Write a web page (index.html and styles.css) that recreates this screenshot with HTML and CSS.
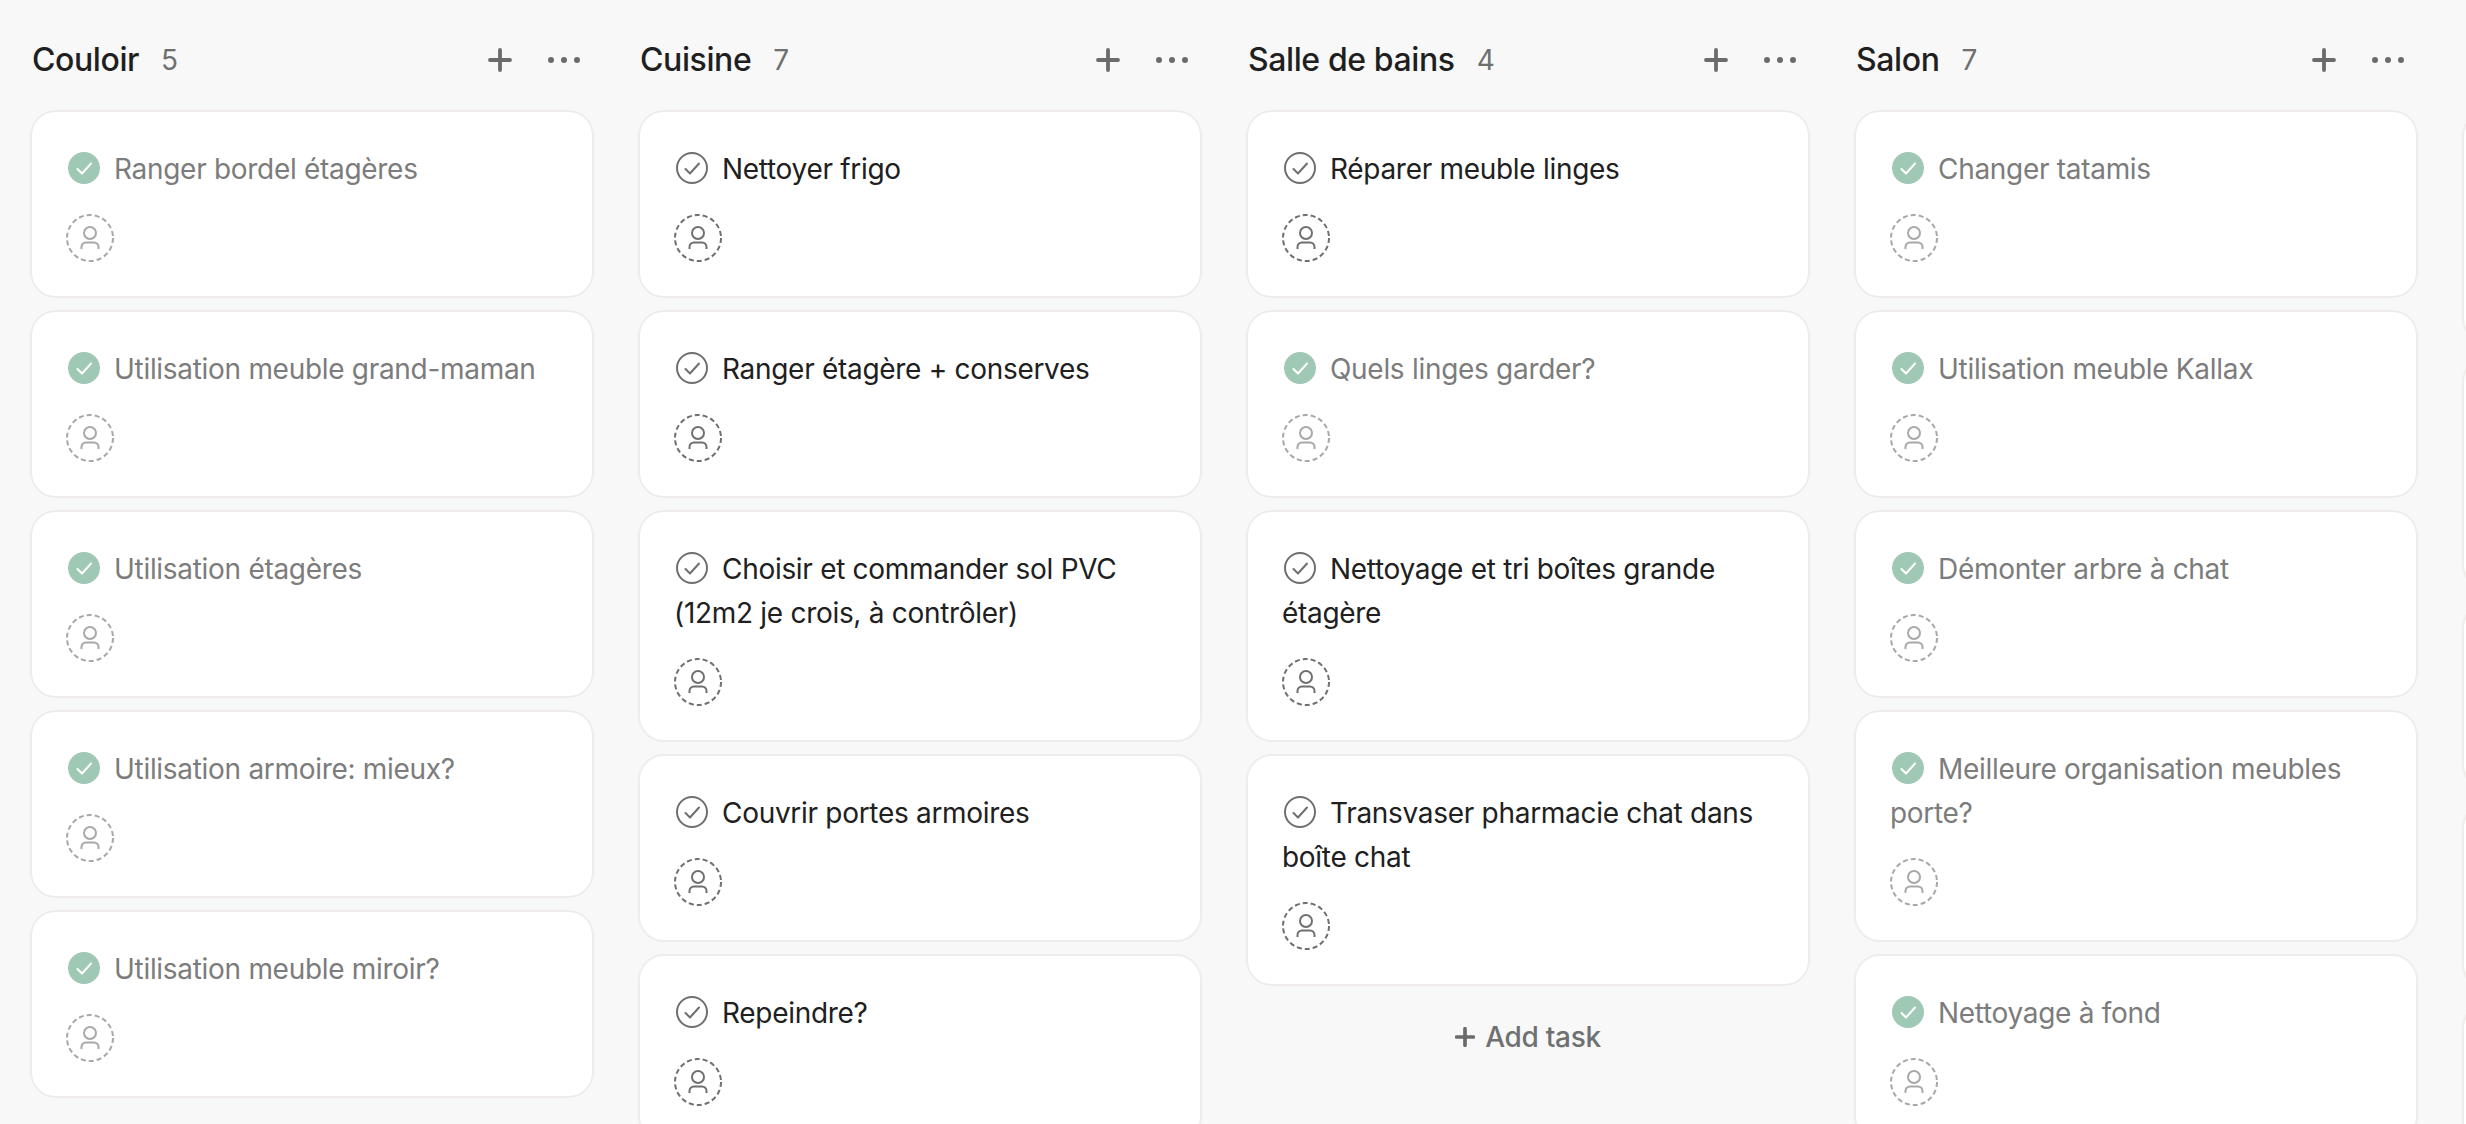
FILE: index.html
```html
<!DOCTYPE html>
<html lang="fr">
<head>
<meta charset="utf-8">
<title>Board</title>
<link rel="stylesheet" href="styles.css">
</head>
<body>
<svg class="defs" width="0" height="0" aria-hidden="true">
  <defs>
    <symbol id="i-check" viewBox="0 0 32 32">
      <circle class="check-ring" cx="16" cy="16" r="15"/>
      <path class="check-mark" d="M9.5 17l4.5 4.5 9-10"/>
    </symbol>
    <symbol id="i-person" viewBox="0 0 48 48">
      <circle class="av-ring" cx="24" cy="24" r="23"/>
      <circle class="av-line" cx="24" cy="19" r="6"/>
      <path class="av-line" d="M15.5 35v-2a4.5 4.5 0 0 1 4.5-4.5h8a4.5 4.5 0 0 1 4.5 4.5v2"/>
    </symbol>
    <symbol id="i-plus" viewBox="0 0 24 24">
      <path class="plus-line" d="M12 2v20M2 12h20"/>
    </symbol>
    <symbol id="i-dots" viewBox="0 0 36 8">
      <circle cx="5" cy="4" r="3"/>
      <circle cx="18" cy="4" r="3"/>
      <circle cx="31" cy="4" r="3"/>
    </symbol>
  </defs>
</svg>
<main class="board">

  <section class="column">
    <header class="col-head">
      <h2 class="col-title">Couloir</h2><span class="col-count">5</span>
      <svg class="head-plus"><use href="#i-plus"/></svg>
      <svg class="head-dots"><use href="#i-dots"/></svg>
    </header>
    <div class="cards">
      <article class="card done"><p class="task"><svg class="check"><use href="#i-check"/></svg>Ranger bordel étagères</p><svg class="avatar"><use href="#i-person"/></svg></article>
      <article class="card done"><p class="task"><svg class="check"><use href="#i-check"/></svg>Utilisation meuble grand-maman</p><svg class="avatar"><use href="#i-person"/></svg></article>
      <article class="card done"><p class="task"><svg class="check"><use href="#i-check"/></svg>Utilisation étagères</p><svg class="avatar"><use href="#i-person"/></svg></article>
      <article class="card done"><p class="task"><svg class="check"><use href="#i-check"/></svg>Utilisation armoire: mieux?</p><svg class="avatar"><use href="#i-person"/></svg></article>
      <article class="card done"><p class="task"><svg class="check"><use href="#i-check"/></svg>Utilisation meuble miroir?</p><svg class="avatar"><use href="#i-person"/></svg></article>
    </div>
  </section>

  <section class="column">
    <header class="col-head">
      <h2 class="col-title">Cuisine</h2><span class="col-count">7</span>
      <svg class="head-plus"><use href="#i-plus"/></svg>
      <svg class="head-dots"><use href="#i-dots"/></svg>
    </header>
    <div class="cards">
      <article class="card"><p class="task"><svg class="check"><use href="#i-check"/></svg>Nettoyer frigo</p><svg class="avatar"><use href="#i-person"/></svg></article>
      <article class="card"><p class="task"><svg class="check"><use href="#i-check"/></svg>Ranger étagère + conserves</p><svg class="avatar"><use href="#i-person"/></svg></article>
      <article class="card"><p class="task"><svg class="check"><use href="#i-check"/></svg>Choisir et commander sol PVC (12m2 je crois, à contrôler)</p><svg class="avatar"><use href="#i-person"/></svg></article>
      <article class="card"><p class="task"><svg class="check"><use href="#i-check"/></svg>Couvrir portes armoires</p><svg class="avatar"><use href="#i-person"/></svg></article>
      <article class="card"><p class="task"><svg class="check"><use href="#i-check"/></svg>Repeindre?</p><svg class="avatar"><use href="#i-person"/></svg></article>
    </div>
  </section>

  <section class="column">
    <header class="col-head">
      <h2 class="col-title">Salle de bains</h2><span class="col-count">4</span>
      <svg class="head-plus"><use href="#i-plus"/></svg>
      <svg class="head-dots"><use href="#i-dots"/></svg>
    </header>
    <div class="cards">
      <article class="card"><p class="task"><svg class="check"><use href="#i-check"/></svg>Réparer meuble linges</p><svg class="avatar"><use href="#i-person"/></svg></article>
      <article class="card done"><p class="task"><svg class="check"><use href="#i-check"/></svg>Quels linges garder?</p><svg class="avatar"><use href="#i-person"/></svg></article>
      <article class="card"><p class="task"><svg class="check"><use href="#i-check"/></svg>Nettoyage et tri boîtes grande étagère</p><svg class="avatar"><use href="#i-person"/></svg></article>
      <article class="card"><p class="task"><svg class="check"><use href="#i-check"/></svg>Transvaser pharmacie chat dans boîte chat</p><svg class="avatar"><use href="#i-person"/></svg></article>
    </div>
    <div class="add-task"><svg class="add-plus"><use href="#i-plus"/></svg>Add task</div>
  </section>

  <section class="column">
    <header class="col-head">
      <h2 class="col-title">Salon</h2><span class="col-count">7</span>
      <svg class="head-plus"><use href="#i-plus"/></svg>
      <svg class="head-dots"><use href="#i-dots"/></svg>
    </header>
    <div class="cards">
      <article class="card done"><p class="task"><svg class="check"><use href="#i-check"/></svg>Changer tatamis</p><svg class="avatar"><use href="#i-person"/></svg></article>
      <article class="card done"><p class="task"><svg class="check"><use href="#i-check"/></svg>Utilisation meuble Kallax</p><svg class="avatar"><use href="#i-person"/></svg></article>
      <article class="card done"><p class="task"><svg class="check"><use href="#i-check"/></svg>Démonter arbre à chat</p><svg class="avatar"><use href="#i-person"/></svg></article>
      <article class="card done"><p class="task"><svg class="check"><use href="#i-check"/></svg>Meilleure organisation meubles porte?</p><svg class="avatar"><use href="#i-person"/></svg></article>
      <article class="card done"><p class="task"><svg class="check"><use href="#i-check"/></svg>Nettoyage à fond</p><svg class="avatar"><use href="#i-person"/></svg></article>
    </div>
  </section>

  <section class="column">
    <div class="cards">
      <article class="card tall"></article>
      <article class="card tall"></article>
      <article class="card"></article>
      <article class="card"></article>
      <article class="card"></article>
    </div>
  </section>

</main>
</body>
</html>
```

FILE: styles.css
```css
* { box-sizing: border-box; }

html, body {
  margin: 0;
  height: 100%;
  overflow: hidden;
  background: #f8f8f8;
}

body {
  font-family: Inter, "Liberation Sans", sans-serif;
  font-size: 28px;
  line-height: 44px;
  letter-spacing: -0.3px;
  color: #202020;
  --ring-fill: none;
  --ring-stroke: #6f6f6f;
  --mark-stroke: #6f6f6f;
  --plus-width: 3.8;
}

.defs { position: absolute; }

.board {
  display: flex;
  gap: 48px;
  padding-left: 32px;
  height: 1124px;
  overflow: hidden;
}

.column {
  flex: 0 0 560px;
  padding-top: 112px;
}

.col-head {
  display: flex;
  align-items: center;
  height: 44px;
  margin-top: -74px;
  margin-bottom: 30px;
}

.col-title {
  margin: 0;
  font-size: 32px;
  font-weight: 500;
  line-height: 44px;
  color: #1f1f1f;
  letter-spacing: -0.4px;
}

.col-count {
  margin-left: 22px;
  font-size: 28px;
  color: #6f6f6f;
}

.head-plus {
  width: 24px;
  height: 24px;
  margin-left: auto;
  margin-right: 34px;
}

.head-dots {
  width: 36px;
  height: 8px;
  margin-right: 10px;
  fill: #6b6b6b;
}

.plus-line {
  fill: none;
  stroke: #6b6b6b;
  stroke-width: var(--plus-width);
  stroke-linecap: round;
}

.cards {
  display: flex;
  flex-direction: column;
  gap: 16px;
}

.card {
  flex: none;
  min-height: 184px;
  padding: 34px;
  background: #fff;
  border-radius: 24px;
  box-shadow: 0 0 0 2px #f0ecec;
}

.card.tall { min-height: 230px; }

.task {
  margin: 0 0 23px;
  padding-top: 1px;
  color: #202020;
}

.check {
  width: 32px;
  height: 32px;
  margin-left: 2px;
  margin-right: 14px;
  vertical-align: -5px;
}

.check-ring {
  fill: var(--ring-fill);
  stroke: var(--ring-stroke);
  stroke-width: 2;
}

.check-mark {
  fill: none;
  stroke: var(--mark-stroke);
  stroke-width: 2;
  stroke-linecap: round;
  stroke-linejoin: round;
}

.avatar {
  display: block;
  width: 48px;
  height: 48px;
}

.av-ring {
  fill: none;
  stroke: #6f6f6f;
  stroke-width: 2;
  stroke-dasharray: 5 3.03;
}

.av-line {
  fill: none;
  stroke: #6f6f6f;
  stroke-width: 2;
}

.done {
  --ring-fill: #9fc8b5;
  --ring-stroke: #9fc8b5;
  --mark-stroke: #fff;
}

.done .task { color: #7c7c7c; }

.done .avatar { opacity: 0.6; }

.add-task {
  display: flex;
  align-items: center;
  justify-content: center;
  height: 106px;
  font-weight: 500;
  color: #6f7072;
}

.add-plus {
  --plus-width: 4.4;
  width: 20px;
  height: 20px;
  margin-right: 10px;
}
```
